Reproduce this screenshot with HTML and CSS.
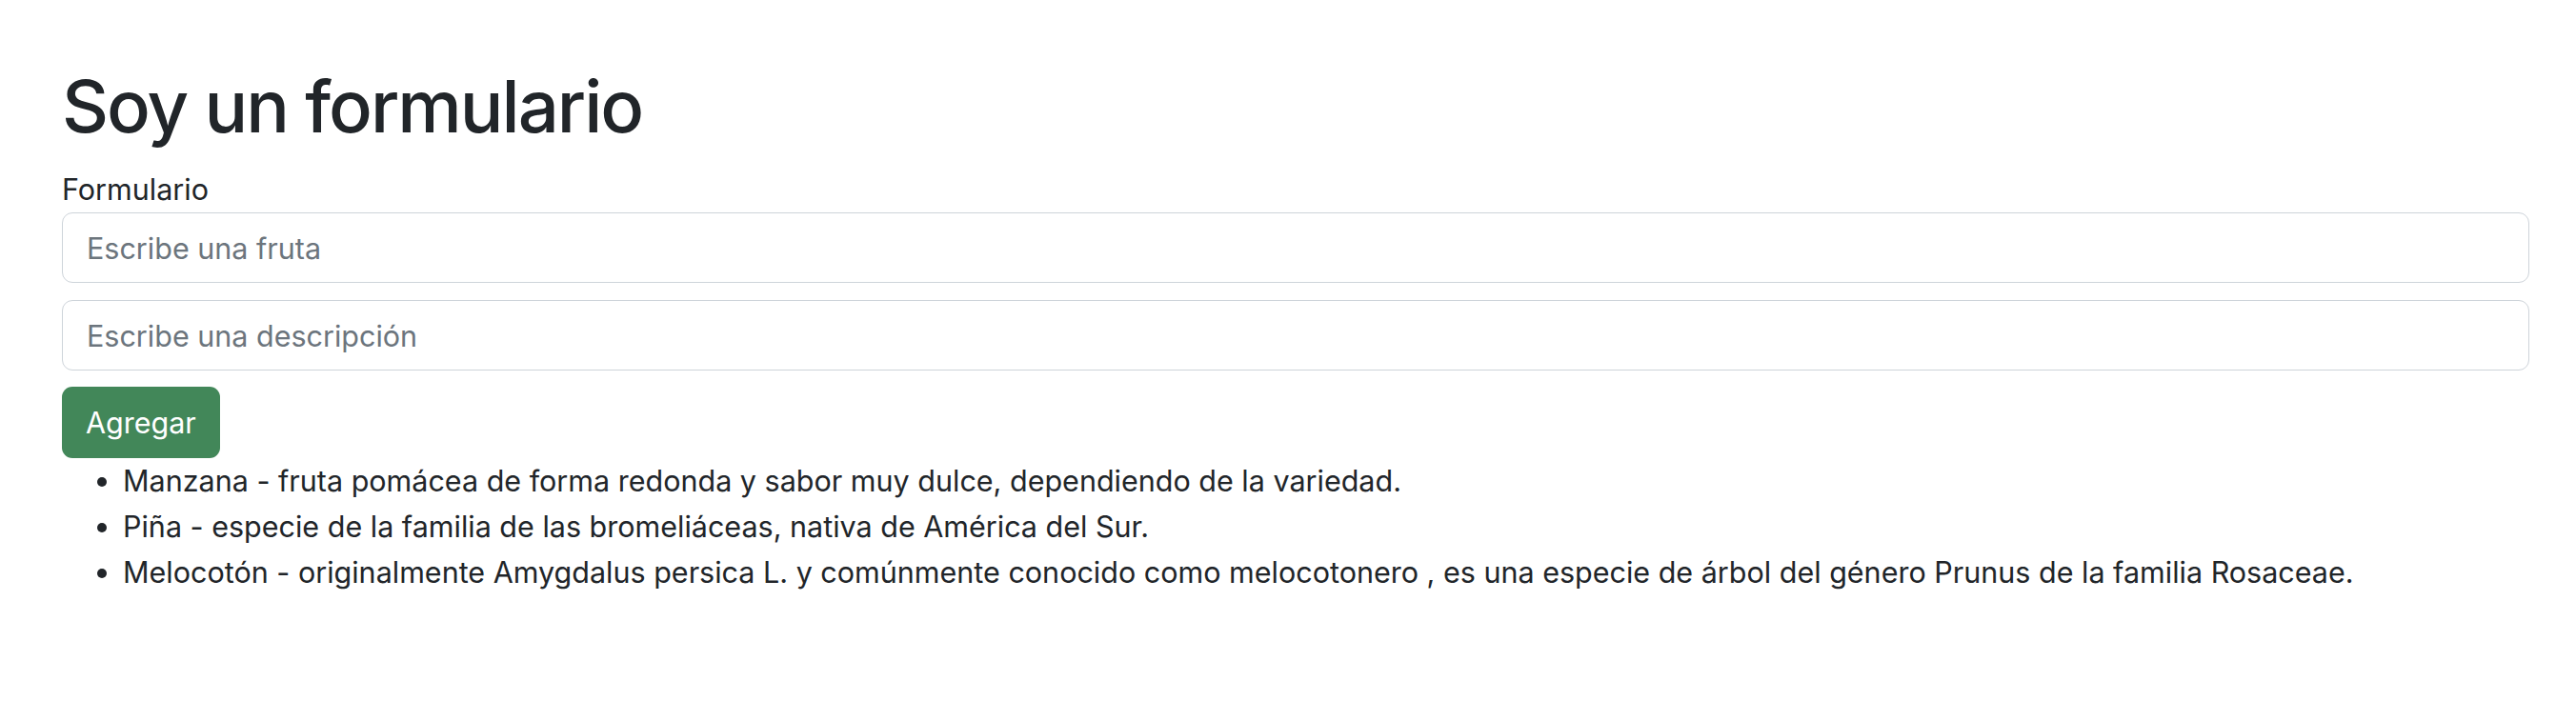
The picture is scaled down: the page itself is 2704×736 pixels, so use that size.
FILE: index.html
```html
<!DOCTYPE html>
<html lang="es">
<head>
<meta charset="utf-8">
<title>Soy un formulario</title>
<link rel="stylesheet" href="styles.css">
</head>
<body>
<div class="container">
  <h1 class="title">Soy un formulario</h1>
  <form class="form">
    <label class="label" for="fruta">Formulario</label>
    <input class="field" id="fruta" type="text" placeholder="Escribe una fruta">
    <input class="field field-last" type="text" placeholder="Escribe una descripción">
    <button class="btn" type="button">Agregar</button>
  </form>
  <ul class="list">
    <li>Manzana - fruta pomácea de forma redonda y sabor muy dulce, dependiendo de la variedad.</li>
    <li>Piña - especie de la familia de las bromeliáceas, nativa de América del Sur.</li>
    <li>Melocotón - originalmente Amygdalus persica L. y comúnmente conocido como melocotonero , es una especie de árbol del género Prunus de la familia Rosaceae.</li>
  </ul>
</div>
</body>
</html>
```
FILE: styles.css
```css
* { box-sizing: border-box; }
html, body { margin: 0; background: #fff; }
body {
  font-family: Inter, "Noto Sans", "Liberation Sans", sans-serif;
  font-size: 30.5px;
  line-height: 48px;
  color: #212529;
}
.container {
  padding: 63px 49px 0 65px;
}
.title {
  margin: 0 0 16px;
  font-size: 76px;
  font-weight: 500;
  letter-spacing: -2px;
  line-height: 96px;
}
.form { display: flex; flex-direction: column; align-items: flex-start; }
.label { display: block; }
.field {
  display: block;
  width: 100%;
  height: 74px;
  margin: 0 0 18px;
  padding: 0 25px;
  border: 1px solid #ced4da;
  border-radius: 11px;
  font: inherit;
  color: #212529;
  background: #fff;
}
.field::placeholder { color: #6c757d; }
.field-last { margin-bottom: 17px; }
.btn {
  height: 75px;
  padding: 0 25px;
  border: none;
  border-radius: 11px;
  background: #428759;
  color: #fff;
  font: inherit;
}
.list {
  margin: 0;
  padding-left: 64px;
}
```
